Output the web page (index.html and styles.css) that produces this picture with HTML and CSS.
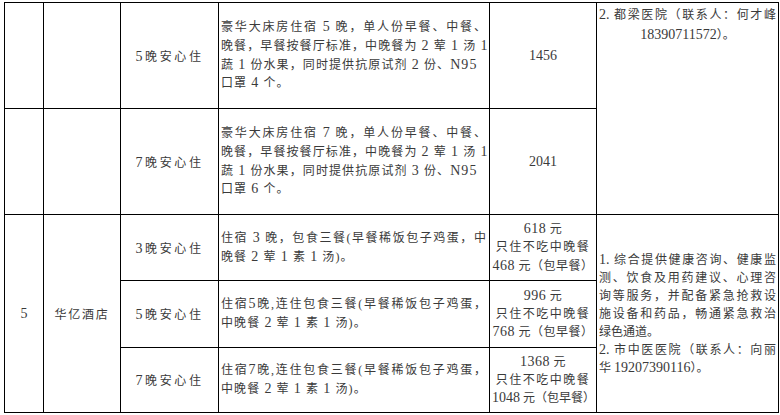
FILE: index.html
```html
<!DOCTYPE html>
<html lang="zh-CN">
<head>
<meta charset="utf-8">
<title>安心住套餐</title>
<link rel="stylesheet" href="styles.css">
</head>
<body>
<table class="grid">
  <colgroup>
    <col class="c-no">
    <col class="c-hotel">
    <col class="c-plan">
    <col class="c-desc">
    <col class="c-price">
    <col class="c-note">
  </colgroup>
  <tbody>
    <tr class="r-tall">
      <td></td>
      <td></td>
      <td class="plan"><span class="d">5</span>晚安心住</td>
      <td class="desc">
        <span class="ln j">豪华大床房住宿 <span class="d">5</span> 晚，单人份早餐、中餐、</span>
        <span class="ln j">晚餐，早餐按餐厅标准，中晚餐为 <span class="d">2</span> 荤 <span class="d">1</span> 汤 <span class="d">1</span></span>
        <span class="ln">蔬 <span class="d">1</span> 份水果，同时提供抗原试剂 <span class="d">2</span> 份、<span class="d">N95</span></span>
        <span class="ln">口罩 <span class="d">4</span> 个。</span>
      </td>
      <td class="num"><span class="d">1456</span></td>
      <td class="note top" rowspan="2">
        <span class="ln j"><span class="d">2.</span> 都梁医院（联系人：何才峰</span>
        <span class="ln ctr"><span class="d">18390711572</span>）。</span>
      </td>
    </tr>
    <tr class="r-tall">
      <td></td>
      <td></td>
      <td class="plan"><span class="d">7</span>晚安心住</td>
      <td class="desc">
        <span class="ln j">豪华大床房住宿 <span class="d">7</span> 晚，单人份早餐、中餐、</span>
        <span class="ln j">晚餐，早餐按餐厅标准，中晚餐为 <span class="d">2</span> 荤 <span class="d">1</span> 汤 <span class="d">1</span></span>
        <span class="ln">蔬 <span class="d">1</span> 份水果，同时提供抗原试剂 <span class="d">3</span> 份、<span class="d">N95</span></span>
        <span class="ln">口罩 <span class="d">6</span> 个。</span>
      </td>
      <td class="num"><span class="d">2041</span></td>
    </tr>
    <tr class="r-a">
      <td class="no" rowspan="3"><span class="d">5</span></td>
      <td class="hotel" rowspan="3">华亿酒店</td>
      <td class="plan"><span class="d">3</span>晚安心住</td>
      <td class="desc">
        <span class="ln j">住宿 <span class="d">3</span> 晚，包食三餐(早餐稀饭包子鸡蛋，中</span>
        <span class="ln">晚餐 <span class="d">2</span> 荤 <span class="d">1</span> 素 <span class="d">1</span> 汤)。</span>
      </td>
      <td class="price">
        <span class="ln"><span class="d">618</span> 元</span>
        <span class="ln mid">只住不吃中晚餐</span>
        <span class="ln"><span class="d">468</span> 元（包早餐）</span>
      </td>
      <td class="note" rowspan="3">
        <span class="ln j"><span class="d">1.</span> 综合提供健康咨询、健康监</span>
        <span class="ln j">测、饮食及用药建议、心理咨</span>
        <span class="ln j">询等服务，并配备紧急抢救设</span>
        <span class="ln j">施设备和药品，畅通紧急救治</span>
        <span class="ln">绿色通道。</span>
        <span class="ln j"><span class="d">2.</span> 市中医医院（联系人：向丽</span>
        <span class="ln">华 <span class="d">19207390116</span>）。</span>
      </td>
    </tr>
    <tr class="r-b">
      <td class="plan"><span class="d">5</span>晚安心住</td>
      <td class="desc">
        <span class="ln j">住宿<span class="d">5</span>晚,连住包食三餐(早餐稀饭包子鸡蛋，</span>
        <span class="ln">中晚餐 <span class="d">2</span> 荤 <span class="d">1</span> 素 <span class="d">1</span> 汤)。</span>
      </td>
      <td class="price">
        <span class="ln"><span class="d">996</span> 元</span>
        <span class="ln mid">只住不吃中晚餐</span>
        <span class="ln"><span class="d">768</span> 元（包早餐）</span>
      </td>
    </tr>
    <tr class="r-c">
      <td class="plan"><span class="d">7</span>晚安心住</td>
      <td class="desc">
        <span class="ln j">住宿<span class="d">7</span>晚,连住包食三餐(早餐稀饭包子鸡蛋，</span>
        <span class="ln">中晚餐 <span class="d">2</span> 荤 <span class="d">1</span> 素 <span class="d">1</span> 汤)。</span>
      </td>
      <td class="price">
        <span class="ln"><span class="d">1368</span> 元</span>
        <span class="ln mid">只住不吃中晚餐</span>
        <span class="ln tight"><span class="d">1048</span> 元（包早餐）</span>
      </td>
    </tr>
  </tbody>
</table>
</body>
</html>
```

FILE: styles.css
```css
html, body {
  margin: 0;
  padding: 0;
  background: #ffffff;
}

body {
  font-family: "Liberation Serif", "Noto Sans CJK SC", serif;
  font-size: 12px;
  color: #3a3a3a;
}

.grid {
  margin: 2px 0 0 4px;
  border-collapse: collapse;
  table-layout: fixed;
  width: 774px;
}

.c-no { width: 39px; }
.c-hotel { width: 77px; }
.c-plan { width: 98px; }
.c-desc { width: 271px; }
.c-price { width: 107px; }
.c-note { width: 182px; }

.grid td {
  border: 1px solid #000;
  padding: 0 2px;
  vertical-align: middle;
  overflow: hidden;
}

.r-tall { height: 106px; }
.r-a { height: 66px; }
.r-b { height: 67px; }
.r-c { height: 65px; }

.d {
  font-size: 14px;
}

.ln {
  display: block;
  white-space: nowrap;
}

.j {
  text-align: justify;
  text-align-last: justify;
}

.ctr {
  text-align: center;
}

.plan {
  text-align: center;
  letter-spacing: 2.6px;
}

.no {
  text-align: center;
}

.hotel {
  text-align: center;
  letter-spacing: 1.8px;
}

.desc {
  line-height: 17.6px;
  letter-spacing: 1.1px;
}

.num {
  text-align: center;
}

.price {
  text-align: center;
  line-height: 18.3px;
  letter-spacing: 0.5px;
  padding: 0;
}

.price .mid {
  letter-spacing: 1.5px;
}

.price .tight {
  letter-spacing: 0;
}

.note {
  line-height: 18px;
}

.note.top {
  vertical-align: top;
  line-height: 19px;
  padding-top: 2px;
}
```
